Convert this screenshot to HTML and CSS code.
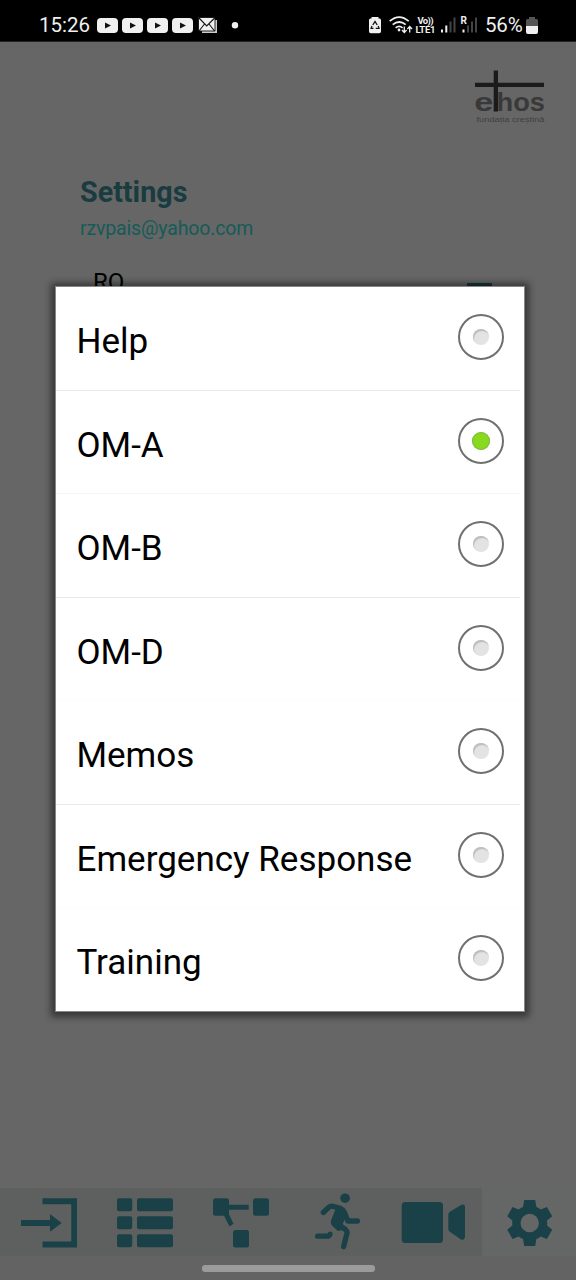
FILE: index.html
```html
<!DOCTYPE html>
<html lang="en">
<head>
<meta charset="utf-8">
<title>Settings</title>
<link rel="stylesheet" href="styles.css">
</head>
<body>
<div class="screen">
  <header class="status">
    <span class="clock">15:26</span>
    <svg class="notices" width="144" height="41" viewBox="95 0 144 41">
      <g fill="#f0f0f0"><rect x="97" y="18" width="21" height="15" rx="4"/><rect x="122" y="18" width="21" height="15" rx="4"/><rect x="147" y="18" width="21" height="15" rx="4"/><rect x="172" y="18" width="21" height="15" rx="4"/></g>
      <path fill="#111" d="M105 22.500l6 3-6 3zM130 22.500l6 3-6 3zM155 22.500l6 3-6 3zM180 22.500l6 3-6 3z"/>
      <path fill="#ccc" d="M202 20h15v13h-15z"/>
      <path fill="#f0f0f0" stroke="#111" stroke-width=".9" d="M198.500 17.500h16.500v13.500h-16.500z"/>
      <path fill="none" stroke="#111" stroke-width="1.100" d="M199 18l7.700 8 8-8M199 31l5.500-7M214.500 31l-5.500-7"/>
      <circle cx="235" cy="25.300" r="3.200" fill="#f0f0f0"/>
    </svg>
    <svg class="signals" width="114" height="41" viewBox="366 0 114 41">
      <path fill="#f0f0f0" d="M371.500 18.500v-1.500h7v1.500h1q1.500 0 1.500 1.500v11.500q0 1.800-1.800 1.800h-8.400q-1.800 0-1.800-1.800V20q0-1.500 1.500-1.500z"/>
      <path fill="none" stroke="#111" stroke-width="1.300" d="M372.800 25l2.200-3.600 2.200 3.600M378.300 26l.7 2.300h-3.300M373.500 28.300h-2.400l.9-2.400"/>
      <g fill="none" stroke="#f0f0f0" stroke-width="1.700"><path d="M389.700 21.200q9.500-8.200 19 0M392.700 24.700q6.500-5.400 13 0M395.600 27.800q3.500-2.800 7 0"/></g>
      <circle cx="399" cy="30" r="1.400" fill="#f0f0f0"/>
      <path fill="none" stroke="#f0f0f0" stroke-width="1.300" d="M404.300 26.500v5.800M402 30l2.300 2.500 2.300-2.500M409.700 32.500v-5.800M407.400 29l2.300-2.500 2.300 2.500"/>
      <text class="volte" x="417.500" y="24" textLength="16">Vo))</text>
      <text class="volte" x="415.500" y="33" textLength="20">LTE1</text>
      <path fill="#f0f0f0" d="M441 29.500h2v3h-2zM445.300 25.500h2v7h-2z"/>
      <path fill="#444" d="M449.500 21.500h2v11h-2zM453.500 17.500h2v15h-2zM467 25.500h2v7h-2zM471 21.500h2v11h-2zM475 17.500h2v15h-2z"/>
      <text class="roam" x="460.500" y="24">R</text><path fill="#f0f0f0" d="M462.500 29.500h2v3h-2z"/>
    </svg>
    <span class="percent">56%</span>
    <svg width="12" height="41" viewBox="526 0 12 41"><path fill="#555" d="M529 19v-2h6v2h1.500q1.500 0 1.500 1.500V26h-12v-5.500q0-1.500 1.500-1.500z"/><path fill="#f0f0f0" d="M526 26h12v6q0 2-2 2h-8q-2 0-2-2z"/></svg>
  </header>
  <main class="page">
    <svg class="logo" width="76" height="60" viewBox="472 66 76 60" role="img" aria-label="ethos">
      <text class="brand" x="474.300" y="110.700" textLength="19" lengthAdjust="spacingAndGlyphs">e</text>
      <text class="brand" x="496.500" y="110.700" textLength="48.500" lengthAdjust="spacingAndGlyphs">hos</text>
      <path fill="#1b1b1b" d="M475 82.700h69v4.300h-69zM493.700 70.500h4.300v41h-4.300z"/>
      <text class="tagline" x="476.500" y="122" textLength="68" lengthAdjust="spacingAndGlyphs">fundația creștină</text>
    </svg>
    <h1>Settings</h1>
    <p class="email">rzvpais@yahoo.com</p>
    <div class="language"><span>RO</span><i></i></div>
  </main>
  <nav class="tabs">
    <span class="tab"><svg viewBox="0 1188 96 68"><path d="M42.500 1198.300H77v49.200H42.500v-6H71.300v-37.200H42.500zM21 1220h29v-6l11.700 9-11.700 8.800V1226H21z"/></svg></span>
    <span class="tab"><svg viewBox="96 1188 96 68"><rect x="117" y="1198.300" width="15.200" height="13" rx="2"/><rect x="137" y="1198.300" width="36" height="13" rx="2"/><rect x="117" y="1216.200" width="15.200" height="13" rx="2"/><rect x="137" y="1216.200" width="36" height="13" rx="2"/><rect x="117" y="1234.300" width="15.200" height="13" rx="2"/><rect x="137" y="1234.300" width="36" height="13" rx="2"/></svg></span>
    <span class="tab"><svg viewBox="192 1188 96 68"><rect x="213" y="1198.300" width="16" height="17.500" rx="2.500"/><rect x="253" y="1198.300" width="16" height="17.500" rx="2.500"/><rect x="233" y="1230" width="16" height="17.500" rx="2.500"/><path d="M227 1204.700h21.700v5H227zM223.500 1214.500l4.500-2.500 5.500 11.800-4 2.600z"/></svg></span>
    <span class="tab"><svg viewBox="288 1188 96 68"><circle cx="345.100" cy="1198.200" r="4.800"/><path class="limbs" d="M323.300 1212.500l5.200-5q2-1.800 4.500-1.200l8 2.300q2.500 1 3.500 3.700l3.300 8.700h9.600M337.500 1224l8 5.500q2 1.500 1.400 4.200l-3.300 13M317.700 1236.200h9.300q2.200 0 3-2"/><path d="M334.500 1207l9 1.700 3 6-3.600 9 1 6-6 1.200-5-4.500q-3-3-1.700-6.500l3.800-9.400z"/></svg></span>
    <span class="tab"><svg viewBox="384 1188 96 68"><rect x="401.700" y="1202" width="41.300" height="41" rx="3.500"/><path d="M449.500 1212l11.500-7q1.500-1 3-.2 1 .7 1 2.200v29q0 4.500-4 3.500l-11.500-8q-1.200-1-1.200-2.500v-14.500q0-1.500 1.200-2.500z"/></svg></span>
    <span class="tab active"><svg viewBox="482 1188 94 68"><path fill-rule="evenodd" d="M524.200 1200h11l1.200 7q2.300.8 4.300 2.500l6.200-2.500 5.300 9.300-5.200 4.200q.4 2.500 0 5l5.200 4.200-5.300 9.300-6.200-2.500q-2 1.700-4.300 2.500l-1.200 7h-11l-1.200-7q-2.300-.8-4.300-2.500l-6.200 2.500-5.300-9.300 5.200-4.200q-.4-2.500 0-5l-5.200-4.200 5.300-9.300 6.200 2.500q2-1.700 4.300-2.500zM529.700 1213.800a9.200 9.200 0 1 0 0 18.400a9.200 9.200 0 1 0 0-18.400z"/></svg></span>
  </nav>
  <div class="gesture"><i></i></div>
  <div class="dialog" role="radiogroup">
    <div class="option"><span>Help</span><i class="radio"></i></div>
    <div class="option faint"><span>OM-A</span><i class="radio checked"></i></div>
    <div class="option"><span>OM-B</span><i class="radio"></i></div>
    <div class="option none"><span>OM-D</span><i class="radio"></i></div>
    <div class="option"><span>Memos</span><i class="radio"></i></div>
    <div class="option none"><span>Emergency Response</span><i class="radio"></i></div>
    <div class="option last"><span>Training</span><i class="radio"></i></div>
  </div>
</div>
</body>
</html>
```
FILE: styles.css
```css
* { box-sizing: border-box; }
body { margin: 0; font-family: Roboto, "Liberation Sans", sans-serif; }
svg { display: block; flex: none; }
.screen { position: relative; width: 576px; height: 1280px; background: #666; display: flex; flex-direction: column; overflow: hidden; }
.status { height: 42px; background: #000; color: #f0f0f0; display: flex; flex: none; padding-left: 39px; border-bottom: 1px solid #252525; }
.clock { width: 56px; font-size: 20.5px; line-height: 51px; white-space: nowrap; }
.signals { margin-left: 127px; }
.percent { width: 41px; margin-left: 5px; font-size: 20.5px; line-height: 51px; letter-spacing: -.2px; }
.volte { font-size: 9.500px; font-weight: 700; fill: #f0f0f0; }
.roam { font-size: 10px; font-weight: 700; fill: #f0f0f0; }
.page { flex: 1; padding: 24px 28px 0 80px; }
.logo { margin-left: auto; }
.brand { font-family: "Liberation Sans", sans-serif; font-weight: 700; font-size: 26px; fill: #393939; }
.tagline { font-family: "Liberation Sans", sans-serif; font-size: 8px; fill: #404040; }
h1 { margin: 49px 0 0; font-size: 28.7px; line-height: 34px; font-weight: 700; color: #193c40; }
.email { margin: 8px 0 0; font-size: 19.5px; letter-spacing: -.16px; line-height: 24px; color: #155b58; }
.language { display: flex; justify-content: space-between; align-items: flex-start; padding: 27px 56px 0 13px; font-size: 24px; line-height: 29px; }
.language i { width: 25px; height: 3px; margin-top: 15px; background: #17383a; }
.tabs { height: 68px; display: flex; flex: none; background: #5e605f; }
.tab { width: 96px; }
.tab:nth-child(5) { width: 98px; }
.tab svg { width: 96px; height: 68px; fill: #194147; }
.tab.active { width: 94px; background: #656766; }
.tab.active svg { width: 94px; }
.limbs { fill: none; stroke: #194147; stroke-width: 5.300; stroke-linecap: round; stroke-linejoin: round; }
.gesture { height: 24px; flex: none; background: #636363; display: flex; justify-content: center; padding-top: 9px; }
.gesture i { width: 173px; height: 7px; border-radius: 3px; background: #9b9b9b; }
.dialog { position: absolute; left: 55px; top: 286px; width: 470px; height: 726px; background: #fff; border: 1px solid #888; padding: 0 4px 0 0; box-shadow: 0 1px 7px 4px rgba(0,0,0,.48); }
.option { height: 103.500px; display: flex; justify-content: space-between; padding: 27px 16px 0 20.500px; border-bottom: 1px solid #eaeaea; font-size: 35px; line-height: 56px; color: #000; white-space: nowrap; }
.option.faint { border-color: #f5f5f5; }
.option.none { border-color: #fdfdfd; }
.option.last { height: 103px; border: 0; }
.radio { width: 46px; height: 46px; border: 2px solid #707070; border-radius: 50%; display: grid; place-items: center; }
.radio::before { content: ""; width: 16px; height: 16px; border-radius: 50%; background: #e3e3e3; box-shadow: inset 1px 2px 1px #bcbcbc; }
.radio.checked::before { width: 18px; height: 18px; background: #88db1c; box-shadow: inset 0 0 1px 1px #86b552; }
```
